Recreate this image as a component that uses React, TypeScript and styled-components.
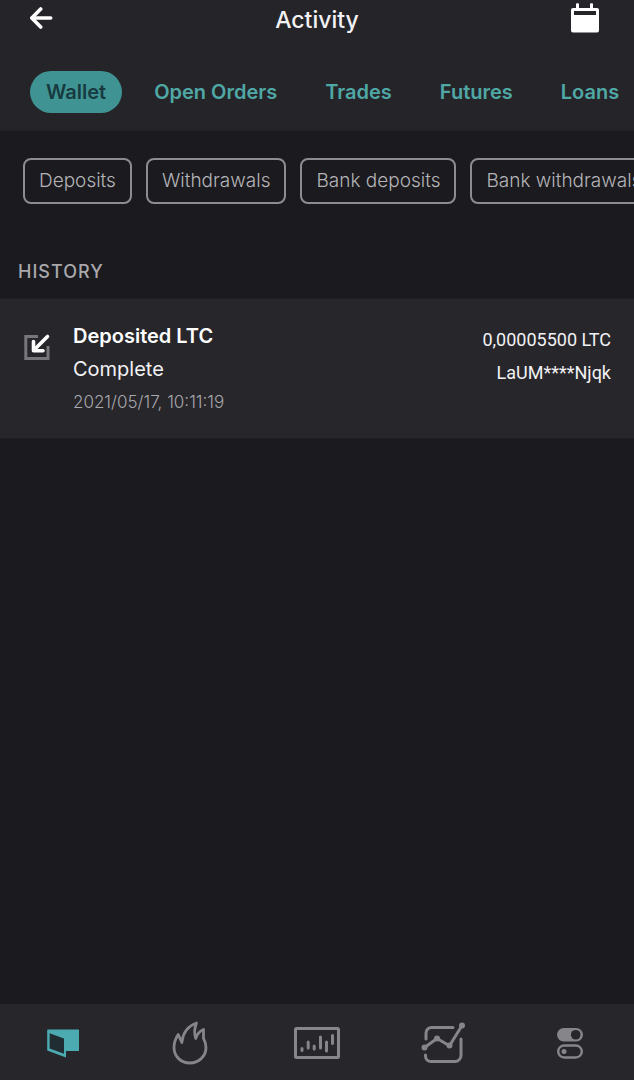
import React, { useState } from "react";
import styled, { createGlobalStyle } from "styled-components";

const GlobalStyle = createGlobalStyle`
  * { box-sizing: border-box; }
  body {
    margin: 0;
    background: #1b1a1e;
    color: #f2f2f4;
    font-family: Inter, "Liberation Sans", sans-serif;
  }
  button { font: inherit; border: 0; padding: 0; background: none; cursor: pointer; }
`;

const Screen = styled.div`
  display: flex;
  flex-direction: column;
  min-height: 100vh;
`;

const Header = styled.header`
  background: #252429;
  border-bottom: 1px solid #201f24;
`;

const TitleBar = styled.div`
  display: grid;
  grid-template-columns: 1fr auto 1fr;
  align-items: center;
  height: 40px;
  padding: 0 30px;
`;

const Title = styled.h1`
  margin: 0;
  font-size: 23px;
  line-height: 40px;
  font-weight: 500;
`;

const IconButton = styled.button<{ $end?: boolean }>`
  display: flex;
  align-items: center;
  justify-self: ${(p) => (p.$end ? "end" : "start")};
  height: 36px;
  margin-bottom: 4px;
  color: #ffffff;
`;

const Tabs = styled.nav`
  display: flex;
  gap: 16px;
  padding: 31px 0 17px 30px;
  overflow-x: auto;
  scrollbar-width: none;
`;

const Tab = styled.button<{ $active: boolean }>`
  flex: none;
  height: 42px;
  padding: 0 16px;
  border-radius: 21px;
  font-size: 20px;
  line-height: 42px;
  font-weight: 600;
  white-space: nowrap;
  color: ${(p) => (p.$active ? "#173a40" : "#4fa8a5")};
  background: ${(p) => (p.$active ? "#3f9493" : "transparent")};
`;

const Filters = styled.div`
  display: flex;
  gap: 14px;
  padding: 27px 0 0 23px;
  overflow-x: auto;
  scrollbar-width: none;
`;

const Chip = styled.button`
  flex: none;
  height: 46px;
  padding: 0 14px;
  border: 2px solid #8d8d91;
  border-radius: 8px;
  font-size: 19px;
  line-height: 42px;
  font-weight: 300;
  white-space: nowrap;
  color: #b4b4b8;
`;

const SectionTitle = styled.h2`
  margin: 0;
  padding: 56px 18px 14px;
  font-size: 18px;
  line-height: 24px;
  font-weight: 500;
  letter-spacing: 1px;
  color: #a9a9ad;
`;

const History = styled.ul`
  margin: 0;
  padding: 0;
  list-style: none;
  flex: 1;
`;

const Entry = styled.li`
  display: flex;
  align-items: flex-start;
  padding: 21px 23px 19px;
  background: #27262b;
  border-top: 1px solid #1f1e22;
  border-bottom: 1px solid #1f1e22;
`;

const EntryIcon = styled.div`
  flex: none;
  width: 50px;
  padding-top: 13px;
`;

const Details = styled.div`
  flex: 1;
  line-height: 33px;
`;

const Kind = styled.div`
  font-size: 20px;
  font-weight: 600;
  color: #ffffff;
`;

const Status = styled.div`
  font-size: 20px;
`;

const Stamp = styled.time`
  display: block;
  font-size: 17px;
  font-weight: 300;
  color: #a8a8ad;
`;

const Amount = styled.div`
  padding-top: 3px;
  text-align: right;
  font-family: Roboto, sans-serif;
  font-size: 18px;
  line-height: 33px;
`;

const BottomNav = styled.nav`
  display: grid;
  grid-template-columns: repeat(5, 1fr);
  height: 77px;
  background: #27262b;
  border-top: 1px solid #1a191c;
`;

const NavButton = styled.button<{ $active?: boolean }>`
  display: flex;
  align-items: center;
  justify-content: center;
  padding-top: 2px;
  color: ${(p) => (p.$active ? "#4cabb0" : "#85858a")};
`;

const BackIcon = () => (
  <svg width="24" height="24" viewBox="1.800 0 24 24" fill="none" stroke="currentColor" strokeWidth="3.6" strokeLinecap="round" strokeLinejoin="round">
    <path d="M12.5 3L3.600 12l8.900 9" />
    <path d="M4 12h18.500" />
  </svg>
);

const CalendarIcon = () => (
  <svg width="34" height="32" viewBox="0 0 34 32" fill="currentColor">
    <path fillRule="evenodd" d="M6 2.300a1 1 0 0 1 1-1h1a1 1 0 0 1 1 1v3.700h11v-3.700a1 1 0 0 1 1-1h1a1 1 0 0 1 1 1v3.700h4a2 2 0 0 1 2 2v20.500a2 2 0 0 1-2 2H3a2 2 0 0 1-2-2v-20.500a2 2 0 0 1 2-2h3zM4 9v4h22V9z" />
  </svg>
);

const DepositIcon = () => (
  <svg width="28" height="28" viewBox="0 0 28 28" fill="none">
    <path d="M15 3.5H2.8v22H25V13" stroke="#77777b" strokeWidth="3" />
    <path d="M24.500 3.500L11 17" stroke="#fff" strokeWidth="3.600" strokeLinecap="round" />
    <path d="M10.500 8.500v9.200h9.500" stroke="#fff" strokeWidth="3.600" strokeLinecap="round" strokeLinejoin="round" />
  </svg>
);

const WalletIcon = () => (
  <svg width="34" height="30" viewBox="0 0 34 30">
    <path d="M1.200 2V22.500L20 29.500V23H33V1.500H1.700z" fill="currentColor" />
    <path d="M3.600 5.200L18 10.600V25.800L3.600 20.500z" fill="#202d33" />
  </svg>
);

const FlameIcon = () => (
  <svg width="36" height="44" viewBox="0 0 36 44" fill="none" stroke="currentColor" strokeWidth="2.8" strokeLinejoin="round" strokeLinecap="round">
    <path d="M24.500 2C16 5 10.800 12 9.800 21.500L6.200 13.500C3.200 18 2 22 2 26.500 2 35.500 9 42 17.800 42S34 35.500 34 26.500C34 22.500 33 20 31.500 17.500V8.500C28 10 25 13 23.800 17.500 21.800 12 22.500 7 24.500 2z" />
  </svg>
);

const CandlesIcon = () => (
  <svg width="46" height="32" viewBox="0 0 46 32" fill="none" stroke="currentColor" strokeWidth="3">
    <rect x="1.500" y="1.500" width="43" height="29" rx="1" />
    <path strokeLinecap="round" d="M8 21.500v2M14.200 15v6M20.200 19v3M26.500 10v11M32.500 15v9M38.500 8.500v8" />
  </svg>
);

const ChartIcon = () => (
  <svg width="46" height="42" viewBox="0 0 46 42" fill="none" stroke="currentColor" strokeWidth="3" strokeLinecap="round" strokeLinejoin="round">
    <path d="M32 5.500H10.500A5.500 5.500 0 0 0 5 11V17" />
    <path d="M4.500 33v1A5.500 5.500 0 0 0 10 39.500H34A6 6 0 0 0 40 33.500V17" />
    <path d="M3.500 25.500L16 16.500l12.500 7.200L41 3.500" />
    <g fill="currentColor" stroke="none">
      <circle cx="3.500" cy="25.500" r="3" />
      <circle cx="16" cy="16.500" r="3" />
      <circle cx="28.500" cy="23.500" r="3" />
      <circle cx="41" cy="3.500" r="3" />
    </g>
  </svg>
);

const TogglesIcon = () => (
  <svg width="30" height="32" viewBox="0 0 30 32" fill="none">
    <rect x="1" y="1" width="26" height="13.500" rx="6.750" fill="currentColor" />
    <circle cx="19.700" cy="7.750" r="4.800" fill="#27262b" />
    <rect x="2.200" y="18.500" width="23.600" height="12" rx="6" stroke="currentColor" strokeWidth="2.400" />
    <circle cx="8" cy="24.500" r="2.500" fill="currentColor" />
  </svg>
);

const tabs = ["Wallet", "Open Orders", "Trades", "Futures", "Loans"];
const filters = ["Deposits", "Withdrawals", "Bank deposits", "Bank withdrawals"];
const navItems = [
  { label: "Wallet", Icon: WalletIcon },
  { label: "Trending", Icon: FlameIcon },
  { label: "Markets", Icon: CandlesIcon },
  { label: "Trade", Icon: ChartIcon },
  { label: "Settings", Icon: TogglesIcon },
];

export default function App() {
  const [tab, setTab] = useState("Wallet");
  return (
    <Screen>
      <GlobalStyle />
      <Header>
        <TitleBar>
          <IconButton aria-label="Back"><BackIcon /></IconButton>
          <Title>Activity</Title>
          <IconButton $end aria-label="Choose dates"><CalendarIcon /></IconButton>
        </TitleBar>
        <Tabs>
          {tabs.map((name) => (
            <Tab key={name} $active={name === tab} onClick={() => setTab(name)}>{name}</Tab>
          ))}
        </Tabs>
      </Header>
      <Filters>
        {filters.map((name) => <Chip key={name}>{name}</Chip>)}
      </Filters>
      <SectionTitle>HISTORY</SectionTitle>
      <History>
        <Entry>
          <EntryIcon><DepositIcon /></EntryIcon>
          <Details>
            <Kind>Deposited LTC</Kind>
            <Status>Complete</Status>
            <Stamp>2021/05/17, 10:11:19</Stamp>
          </Details>
          <Amount>
            <div>0,00005500 LTC</div>
            <div>LaUM****Njqk</div>
          </Amount>
        </Entry>
      </History>
      <BottomNav>
        {navItems.map(({ label, Icon }, i) => (
          <NavButton key={label} $active={i === 0} aria-label={label}><Icon /></NavButton>
        ))}
      </BottomNav>
    </Screen>
  );
}
